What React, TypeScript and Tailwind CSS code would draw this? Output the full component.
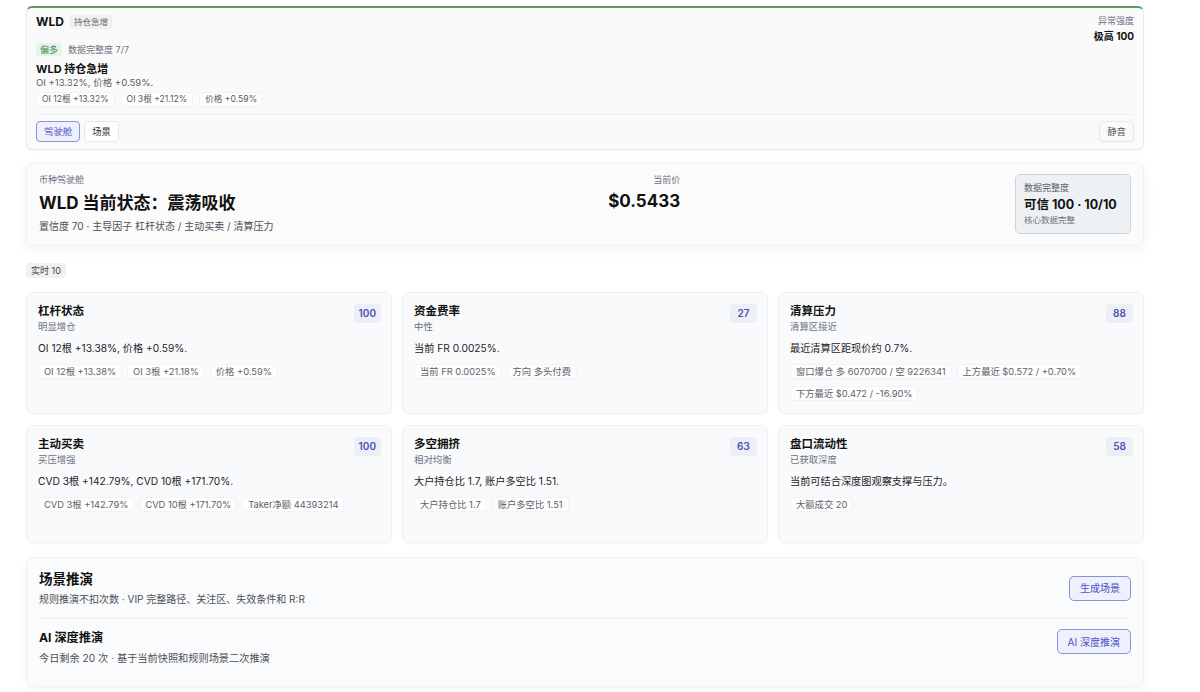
import React from "react";

const Chip = ({ children, small }: { children: React.ReactNode; small?: boolean }) => (
  <span
    className={
      small
        ? "inline-flex h-[15px] items-center whitespace-nowrap rounded-[3px] border border-[#f2f3f5] bg-white/60 px-[5px] text-[8.6px] leading-none text-[#555a62]"
        : "inline-flex h-[15px] items-center whitespace-nowrap rounded-[3px] border border-[#f2f3f5] bg-white/60 px-[5px] text-[9.3px] leading-none text-[#5d626a]"
    }
  >
    {children}
  </span>
);

type Metric = {
  title: string;
  sub: string;
  score: string;
  body: string;
  chips: string[];
};

const metrics: Metric[] = [
  {
    title: "杠杆状态",
    sub: "明显增仓",
    score: "100",
    body: "OI 12根 +13.38%, 价格 +0.59%.",
    chips: ["OI 12根 +13.38%", "OI 3根 +21.18%", "价格 +0.59%"],
  },
  {
    title: "资金费率",
    sub: "中性",
    score: "27",
    body: "当前 FR 0.0025%.",
    chips: ["当前 FR 0.0025%", "方向 多头付费"],
  },
  {
    title: "清算压力",
    sub: "清算区接近",
    score: "88",
    body: "最近清算区距现价约 0.7%.",
    chips: ["窗口爆仓 多 6070700 / 空 9226341", "上方最近 $0.572 / +0.70%", "下方最近 $0.472 / -16.90%"],
  },
  {
    title: "主动买卖",
    sub: "买压增强",
    score: "100",
    body: "CVD 3根 +142.79%, CVD 10根 +171.70%.",
    chips: ["CVD 3根 +142.79%", "CVD 10根 +171.70%", "Taker净额 44393214"],
  },
  {
    title: "多空拥挤",
    sub: "相对均衡",
    score: "63",
    body: "大户持仓比 1.7, 账户多空比 1.51.",
    chips: ["大户持仓比 1.7", "账户多空比 1.51"],
  },
  {
    title: "盘口流动性",
    sub: "已获取深度",
    score: "58",
    body: "当前可结合深度图观察支撑与压力。",
    chips: ["大额成交 20"],
  },
];

function MetricCard({ m }: { m: Metric }) {
  return (
    <div className="min-h-[118px] rounded-[7px] border border-[#eef0f3] bg-[#f9fafb] pb-[12px] pl-[11px] pr-[10px] pt-[10px] shadow-[0_1px_3px_rgba(0,0,0,0.03)]">
      <div className="flex items-start justify-between">
        <div>
          <div className="text-[11.5px] font-bold leading-[16px] text-[#111111]">{m.title}</div>
          <div className="mt-[1px] text-[9.4px] leading-[13px] text-[#6b7280]">{m.sub}</div>
        </div>
        <span className="mt-[1px] inline-flex h-[19px] min-w-[27px] items-center justify-center rounded-[4px] bg-[#eceff5] px-[5px] text-[10px] font-semibold text-[#4b50b8]">
          {m.score}
        </span>
      </div>
      <div className="mt-[8px] text-[10.2px] leading-[14px] text-[#1f2328]">{m.body}</div>
      <div className="mt-[9px] flex flex-wrap gap-x-[5px] gap-y-[7px]">
        {m.chips.map((c) => (
          <Chip key={c}>{c}</Chip>
        ))}
      </div>
    </div>
  );
}

export default function App() {
  return (
    <div className="min-h-[692px] bg-white pt-[6px] font-[family-name:Inter,'Noto_Sans_CJK_SC',sans-serif] text-[#111111]">
      <div className="ml-[26px] flex w-[1118px] flex-col">
        {/* Alert card */}
        <div className="rounded-[6px] border border-[#e8e9eb] border-t-2 border-t-[#5a9b6e] bg-[#fafafa] px-[9px] pb-[7px] pt-[5px] shadow-[0_1px_3px_rgba(0,0,0,0.04)]">
          <div className="flex justify-between">
            <div>
              <div className="flex h-[18px] items-center gap-[6px]">
                <span className="text-[12px] font-bold leading-none text-[#111]">WLD</span>
                <span className="inline-flex h-[14px] items-center rounded-[3px] bg-[#f0f0f1] px-[4px] text-[8.5px] leading-none text-[#666a70]">
                  持仓急增
                </span>
              </div>
              <div className="mt-[11px] flex h-[14px] items-center gap-[6px]">
                <span className="inline-flex h-[13px] items-center rounded-[3px] bg-[#e7f3ea] px-[4px] text-[9px] leading-none text-[#3d8b52]">
                  偏多
                </span>
                <span className="text-[9px] leading-none text-[#6b7280]">数据完整度 7/7</span>
              </div>
              <div className="mt-[6px] text-[11px] font-bold leading-[14px] text-[#111]">WLD 持仓急增</div>
              <div className="text-[9.5px] leading-[14px] text-[#5b6068]">OI +13.32%, 价格 +0.59%.</div>
              <div className="mt-[2px] flex gap-[6px]">
                <Chip small>OI 12根 +13.32%</Chip>
                <Chip small>OI 3根 +21.12%</Chip>
                <Chip small>价格 +0.59%</Chip>
              </div>
            </div>
            <div className="pt-[2px] text-right">
              <div className="text-[9px] leading-[12px] text-[#6b7280]">异常强度</div>
              <div className="mt-[2px] text-[10px] font-bold leading-[14px] text-[#111]">极高 100</div>
            </div>
          </div>
          <div className="mt-[7px] flex items-center justify-between border-t border-[#eeeff1] pt-[6px]">
            <div className="flex gap-[4px]">
              <button className="h-[21px] rounded-[4px] border border-[#8d91d8] bg-[#eef0fb] px-[7px] text-[9.4px] leading-none text-[#5558c9]">
                驾驶舱
              </button>
              <button className="h-[21px] rounded-[4px] border border-[#e6e7ea] bg-white px-[7px] text-[9.4px] leading-none text-[#333]">
                场景
              </button>
            </div>
            <button className="h-[21px] rounded-[4px] border border-[#e6e7ea] bg-[#fafafa] px-[7px] text-[9.4px] leading-none text-[#555]">
              静音
            </button>
          </div>
        </div>

        {/* Cockpit card */}
        <div className="mt-[12px] flex items-start justify-between rounded-[7px] border border-[#f1f2f4] bg-[#fbfbfc] px-[12px] py-[11px] shadow-[0_4px_14px_rgba(0,0,0,0.05)]">
          <div>
            <div className="text-[9px] leading-[12px] text-[#6b7280]">币种驾驶舱</div>
            <div className="mt-[6px] text-[17px] font-bold leading-[22px] text-[#111]">WLD 当前状态：震荡吸收</div>
            <div className="mt-[5px] text-[10px] leading-[14px] text-[#4b5058]">
              置信度 70 · 主导因子 杠杆状态 / 主动买卖 / 清算压力
            </div>
          </div>
          <div className="text-right">
            <div className="text-[9px] leading-[12px] text-[#6b7280]">当前价</div>
            <div className="mt-[4px] text-[17px] font-bold leading-[22px] text-[#111]">$0.5433</div>
          </div>
          <div className="w-[116px] rounded-[5px] border border-[#cfd3d9] bg-[#eef1f4] px-[8px] pb-[7px] pt-[7px]">
            <div className="text-[9px] leading-[12px] text-[#5b6068]">数据完整度</div>
            <div className="mt-[2px] text-[12.5px] font-bold leading-[17px] text-[#111]">可信 100 · 10/10</div>
            <div className="mt-[1px] text-[8.5px] leading-[12px] text-[#6b7280]">核心数据完整</div>
          </div>
        </div>

        {/* realtime tag */}
        <div className="mt-[17px] flex">
          <span className="inline-flex h-[15px] items-center rounded-[3px] bg-[#f0f1f3] px-[5px] text-[9px] leading-none text-[#444]">
            实时 10
          </span>
        </div>

        {/* Metrics grid */}
        <div className="mt-[14px] grid grid-cols-3 gap-x-[10px] gap-y-[11px]">
          {metrics.map((m) => (
            <MetricCard key={m.title} m={m} />
          ))}
        </div>

        {/* Scenario card */}
        <div className="mt-[14px] rounded-[7px] border border-[#f0f1f3] bg-[#fafbfc] px-[12px] pb-[21px] pt-[12px] shadow-[0_2px_10px_rgba(0,0,0,0.04)]">
          <div className="flex items-center justify-between pb-[12px]">
            <div>
              <div className="text-[13.5px] font-bold leading-[18px] text-[#111]">场景推演</div>
              <div className="mt-[4px] text-[10px] leading-[14px] text-[#4b5058]">
                规则推演不扣次数 · VIP 完整路径、关注区、失效条件和 R:R
              </div>
            </div>
            <button className="h-[25px] rounded-[5px] border border-[#8d91d8] bg-[#eef0fb] px-[10px] text-[10px] leading-none text-[#4d51c3]">
              生成场景
            </button>
          </div>
          <div className="flex items-start justify-between border-t border-[#eeeff1] pt-[11px]">
            <div>
              <div className="text-[12.2px] font-bold leading-[16px] text-[#111]">AI 深度推演</div>
              <div className="mt-[5px] text-[10.2px] leading-[14px] text-[#4b5058]">
                今日剩余 20 次 · 基于当前快照和规则场景二次推演
              </div>
            </div>
            <button className="-mt-[1px] h-[25px] rounded-[5px] border border-[#8d91d8] bg-[#eef0fb] px-[10px] text-[10px] leading-none text-[#4d51c3]">
              AI 深度推演
            </button>
          </div>
        </div>
      </div>
    </div>
  );
}
